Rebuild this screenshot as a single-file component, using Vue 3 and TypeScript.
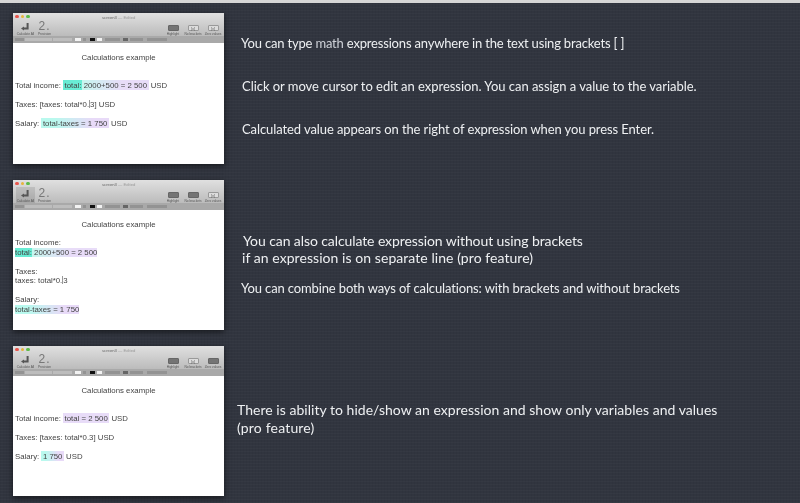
<template>
  <div class="page">
    <section v-for="shot in shots" :key="shot.id" class="row" :class="'row-' + shot.id">
      <div class="window">
        <div class="chrome">
          <div class="titlebar">
            <span class="light red"></span>
            <span class="light yellow"></span>
            <span class="light green"></span>
            <span class="title"><b>screen3</b> — Edited</span>
          </div>
          <div class="tools">
            <div class="tool calc" :class="{ pressed: shot.id === 'two' }">
              <svg width="9" height="8" viewBox="0 0 9 8">
                <path d="M6.6 0v5.6H2" fill="none" stroke="#555" stroke-width="2" />
                <path d="M0 5.6L3 3.6v4z" fill="#555" />
              </svg>
              <span>Calculate All</span>
            </div>
            <div class="tool precision">
              <span class="digit">2.</span>
              <span>Precision</span>
            </div>
            <div class="spacer"></div>
            <div v-for="b in shot.buttons" :key="b.label" class="tool">
              <span class="chip" :class="{ on: b.on }">{{ b.glyph }}</span>
              <span>{{ b.label }}</span>
            </div>
          </div>
          <div class="formatbar">
            <i
              v-for="(item, i) in formatItems"
              :key="i"
              :class="item.c"
              :style="{ width: item.w + 'px', marginLeft: item.gap + 'px' }"
            ></i>
          </div>
        </div>
        <div class="doc">
          <div class="heading">Calculations example</div>
          <div class="lines" :class="shot.layout">
            <div v-for="(line, i) in shot.lines" :key="i" class="line">
              <span v-for="(part, j) in line" :key="j" :class="part.c">{{ part.t }}</span>
            </div>
          </div>
        </div>
      </div>
      <div class="notes">
        <p v-for="note in shot.notes" :key="note.c" class="note" :class="note.c">
          {{ note.text }}<span v-if="note.soft" class="soft">{{ note.soft }}</span>{{ note.rest }}
        </p>
      </div>
    </section>
  </div>
</template>

<script setup lang="ts">
type Part = { t: string; c?: string }

const plain = (t: string): Part => ({ t })
const caret: Part = { t: '', c: 'caret' }

const formatItems = [
  { w: 9, gap: 2, c: '' },
  { w: 27, gap: 1, c: 'pale' },
  { w: 19, gap: 1, c: 'pale' },
  { w: 6, gap: 3, c: 'white' },
  { w: 3, gap: 2, c: '' },
  { w: 5, gap: 4, c: 'black' },
  { w: 5, gap: 2, c: 'white' },
  { w: 15, gap: 3, c: '' },
  { w: 5, gap: 3, c: 'dark' },
  { w: 13, gap: 2, c: '' },
  { w: 20, gap: 4, c: '' },
]

const shots = [
  {
    id: 'one',
    layout: 'inline',
    buttons: [
      { label: 'Highlight', glyph: '', on: true },
      { label: 'No brackets', glyph: '[x]', on: false },
      { label: 'Zero values', glyph: '[v]', on: false },
    ],
    lines: [
      [
        plain('Total income: '),
        { t: 'total:', c: 'strong' },
        { t: ' 2000+500 = 2 500', c: 'grad tail' },
        plain(' USD'),
      ],
      [plain('Taxes: [taxes: total*0.'), caret, plain('3] USD')],
      [plain('Salary: '), { t: 'total-taxes = 1 750', c: 'grad' }, plain(' USD')],
    ] as Part[][],
    notes: [
      { text: 'You can type ', soft: 'math', rest: ' expressions anywhere in the text using brackets [ ]', c: 'n1' },
      { text: 'Click or move cursor to edit an expression. You can assign a value to the variable.', c: 'n2' },
      { text: 'Calculated value appears on the right of expression when you press Enter.', c: 'n3' },
    ],
  },
  {
    id: 'two',
    layout: 'stacked',
    buttons: [
      { label: 'Highlight', glyph: '', on: true },
      { label: 'No brackets', glyph: '', on: true },
      { label: 'Zero values', glyph: '[v]', on: false },
    ],
    lines: [
      [plain('Total income:')],
      [{ t: 'total:', c: 'strong' }, { t: ' 2000+500 = 2 500', c: 'grad tail' }],
      [plain('\u00a0')],
      [plain('Taxes:')],
      [plain('taxes: total*0.'), caret, plain('3')],
      [plain('\u00a0')],
      [plain('Salary:')],
      [{ t: 'total-taxes = 1 750', c: 'grad' }],
    ] as Part[][],
    notes: [
      { text: 'You can also calculate expression without using brackets', c: 'n4' },
      { text: 'if an expression is on separate line (pro feature)', c: 'n5' },
      { text: 'You can combine both ways of calculations: with brackets and without brackets', c: 'n6' },
    ],
  },
  {
    id: 'three',
    layout: 'inline',
    buttons: [
      { label: 'Highlight', glyph: '', on: true },
      { label: 'No brackets', glyph: '[x]', on: false },
      { label: 'Zero values', glyph: '', on: true },
    ],
    lines: [
      [plain('Total income: '), { t: 'total = 2 500', c: 'violet' }, plain(' USD')],
      [plain('Taxes: [taxes: total*0.3] USD')],
      [plain('Salary: '), { t: '1 750', c: 'grad' }, plain(' USD')],
    ] as Part[][],
    notes: [
      { text: 'There is ability to hide/show an expression and show only variables and values', c: 'n7' },
      { text: '(pro feature)', c: 'n8' },
    ],
  },
]
</script>

<style>
body {
  background: #30343e;
}
</style>

<style scoped>
.page {
  width: 800px;
  height: 503px;
  box-sizing: border-box;
  overflow: hidden;
  border-top: 3px solid #d6d6d6;
  padding: 10px 0 0 13px;
  display: flex;
  flex-direction: column;
  gap: 16px;
  background-color: #31353f;
  background-image:
    repeating-linear-gradient(0deg, rgba(255, 255, 255, 0.018) 0 1px, transparent 1px 3px),
    repeating-linear-gradient(90deg, rgba(0, 0, 0, 0.04) 0 1px, transparent 1px 3px);
  font-family: "Liberation Sans", Arial, sans-serif;
}

.row {
  display: flex;
  height: 150px;
  flex: none;
}

.row-one {
  height: 151px;
}

.window {
  width: 211px;
  flex: none;
  display: flex;
  flex-direction: column;
  background: #fff;
  box-shadow: 0 2px 6px rgba(0, 0, 0, 0.55);
  filter: blur(0.4px);
}

.chrome {
  height: 30px;
  flex: none;
  display: flex;
  flex-direction: column;
  background: linear-gradient(#e0e0e0, #b0b0b0);
}

.titlebar {
  position: relative;
  height: 7px;
  flex: none;
  display: flex;
  align-items: center;
  gap: 2px;
  padding-left: 2px;
}

.light {
  width: 3.5px;
  height: 3.5px;
  border-radius: 50%;
}

.red { background: #e8564c; }
.yellow { background: #e6b53a; }
.green { background: #5cbb4a; }

.title {
  position: absolute;
  left: 89px;
  top: 1px;
  font-size: 4.2px;
  line-height: 7px;
  color: #999;
  white-space: nowrap;
}

.title b {
  font-weight: normal;
  color: #666;
}

.tools {
  height: 16px;
  flex: none;
  display: flex;
  gap: 2px;
  padding: 0 2px 0 3px;
}

.tool {
  min-width: 18px;
  display: flex;
  flex-direction: column;
  align-items: center;
  justify-content: flex-end;
  font-size: 3.2px;
  line-height: 4px;
  color: #555;
  white-space: nowrap;
}

.tool.calc {
  min-width: 19px;
}

.tool svg {
  margin-bottom: 1px;
}

.tool.pressed {
  background: rgba(0, 0, 0, 0.1);
}

.tool.precision {
  min-width: 14px;
  margin-left: 0.5px;
}

.digit {
  font-size: 12px;
  line-height: 11px;
  letter-spacing: 1px;
  color: #777;
}

.spacer {
  flex: 1;
}

.chip {
  width: 11px;
  height: 6px;
  margin-bottom: 1px;
  border-radius: 1px;
  background: #dcdcdc;
  border: 0.5px solid #999;
  box-sizing: border-box;
  font-size: 4px;
  line-height: 5px;
  text-align: center;
  color: #666;
}

.chip.on {
  background: #747474;
  border-color: #666;
}

.formatbar {
  height: 7px;
  flex: none;
  display: flex;
  align-items: center;
  background: #a9a9a9;
}

.formatbar i {
  height: 3px;
  background: #939393;
}

.formatbar .pale { background: #bdbdbd; }
.formatbar .white { background: #f2f2f2; }
.formatbar .black { background: #111; }
.formatbar .dark { background: #666; }

.doc {
  flex: 1;
  padding: 0 2px;
  font-size: 7.8px;
  color: #444;
}

.heading {
  margin-top: 8px;
  line-height: 13px;
  text-align: center;
}

.line {
  white-space: pre;
  line-height: 9.5px;
  height: 9.5px;
}

.lines.inline {
  margin-top: 16.5px;
}

.lines.inline .line + .line {
  margin-top: 9.5px;
}

.lines.stacked {
  margin-top: 7px;
}

.lines.inline .strong,
.lines.inline .violet,
.lines.inline .grad {
  padding: 0.5px 1.5px;
}

.lines.inline .strong {
  padding-right: 0;
}

.lines.inline .tail {
  padding-left: 0;
}

.strong { background: #69ecd4; }
.grad { background: linear-gradient(90deg, #b9f9ee 20%, #e8daf8 75%); }
.grad.tail { background: linear-gradient(90deg, #c6f6ee, #e8dcf8 60%); }
.violet { background: #e8dcf8; }

.caret {
  display: inline-block;
  width: 0;
  height: 8px;
  border-left: 0.5px solid #999;
  vertical-align: -1px;
}

.notes {
  flex: 1;
  display: flex;
  flex-direction: column;
  color: #eef0f2;
  font-family: Lato, "Open Sans", sans-serif;
  filter: blur(0.25px);
}

.note {
  margin: 0;
  white-space: nowrap;
  line-height: 18px;
}

.soft { color: #cfd2d8; }

.n1 { margin: 21px 0 0 17px; font-size: 13px; letter-spacing: -0.18px; }
.n2 { margin: 25px 0 0 18px; font-size: 13px; letter-spacing: -0.04px; }
.n3 { margin: 25px 0 0 18px; font-size: 13px; letter-spacing: -0.09px; }
.n4 { margin: 52px 0 0 19px; font-size: 14px; letter-spacing: -0.09px; }
.n5 { margin: -1px 0 0 18px; font-size: 14px; letter-spacing: 0.06px; }
.n6 { margin: 12px 0 0 17px; font-size: 13px; letter-spacing: -0.13px; }
.n7 { margin: 55px 0 0 13px; font-size: 14px; letter-spacing: 0.03px; }
.n8 { margin: 0 0 0 13px; font-size: 14px; letter-spacing: 0.18px; }
</style>
